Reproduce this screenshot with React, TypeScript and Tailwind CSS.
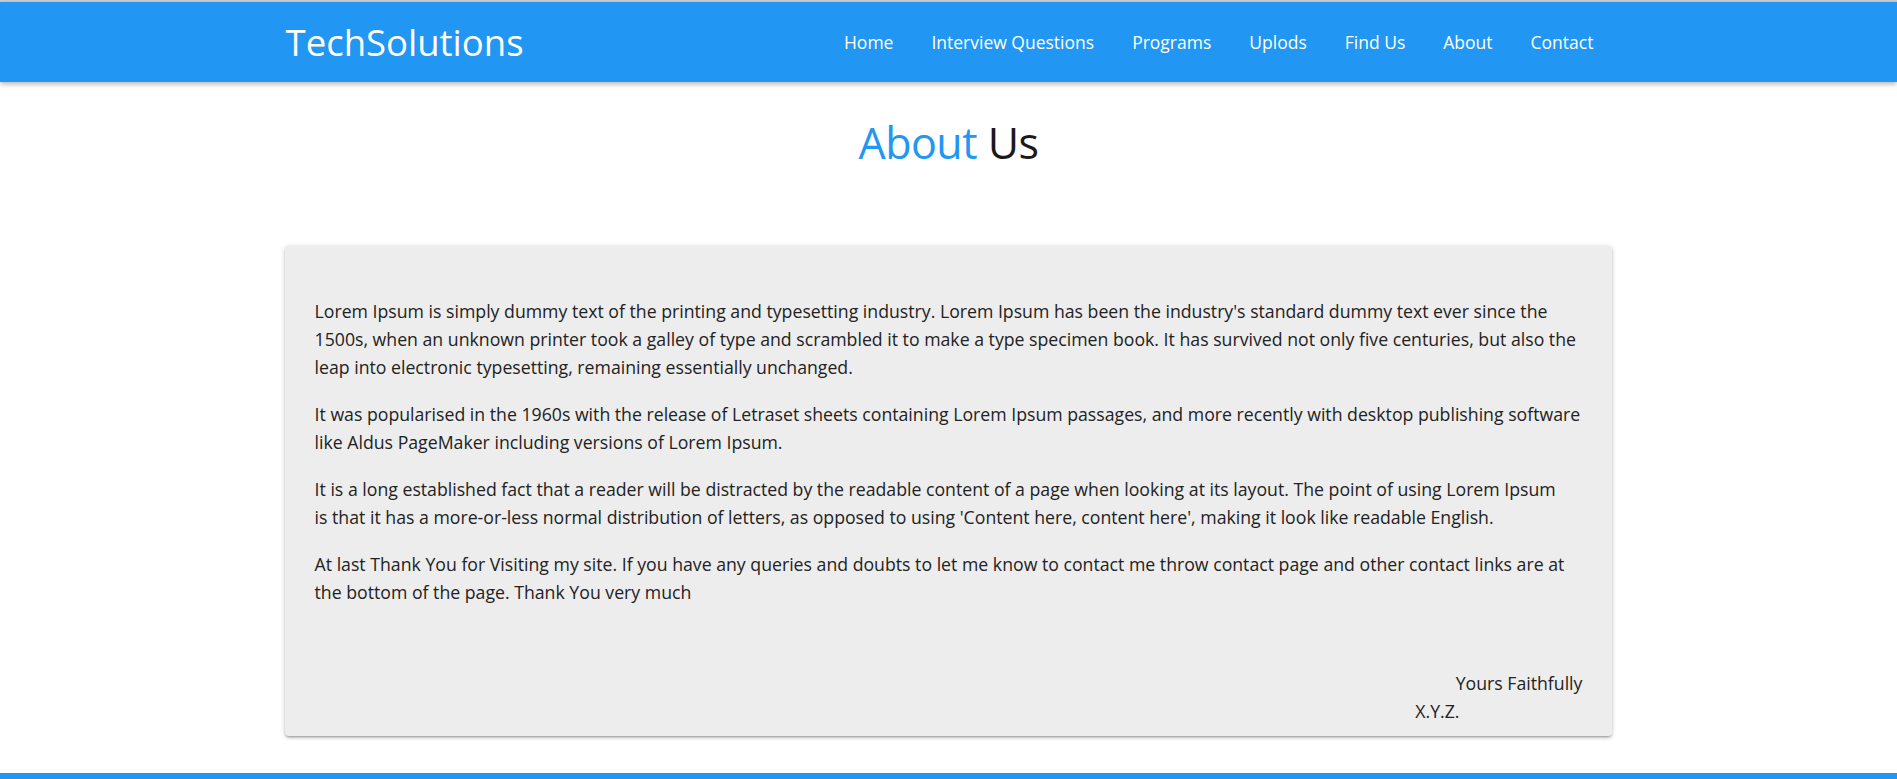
const links = ["Home", "Interview Questions", "Programs", "Uplods", "Find Us", "About", "Contact"];

// lines are broken where the original page broke them
const paragraphs = [
  [
    "Lorem Ipsum is simply dummy text of the printing and typesetting industry. Lorem Ipsum has been the industry's standard dummy text ever since the",
    "1500s, when an unknown printer took a galley of type and scrambled it to make a type specimen book. It has survived not only five centuries, but also the",
    "leap into electronic typesetting, remaining essentially unchanged.",
  ],
  [
    "It was popularised in the 1960s with the release of Letraset sheets containing Lorem Ipsum passages, and more recently with desktop publishing software",
    "like Aldus PageMaker including versions of Lorem Ipsum.",
  ],
  [
    "It is a long established fact that a reader will be distracted by the readable content of a page when looking at its layout. The point of using Lorem Ipsum",
    "is that it has a more-or-less normal distribution of letters, as opposed to using 'Content here, content here', making it look like readable English.",
  ],
  [
    "At last Thank You for Visiting my site. If you have any queries and doubts to let me know to contact me throw contact page and other contact links are at",
    "the bottom of the page. Thank You very much",
  ],
];

export default function App() {
  return (
    <div className="flex min-h-screen flex-col bg-white font-['Open_Sans','Liberation_Sans',sans-serif] text-[#222]">
      <div className="h-[2px] bg-[#cdcdcd]" />
      <header className="bg-[#2196f3] shadow-[0_2px_5px_rgba(0,0,0,0.3)]">
        <nav className="mx-auto flex h-[80px] w-[70%] items-center justify-between">
          <a className="pl-px text-[36.5px] text-white">TechSolutions</a>
          <ul className="flex">
            {links.map((link) => (
              <li key={link}>
                <a className="block px-[19px] text-[17.5px] text-white">{link}</a>
              </li>
            ))}
          </ul>
        </nav>
      </header>

      <main className="flex-1">
        <h1 className="mt-[39px] text-center text-[43px] leading-none tracking-[-0.5px]">
          <span className="text-[#2196f3]">About</span> <span className="text-[#1a1a1a]">Us</span>
        </h1>

        <section className="mx-auto mt-[82px] w-[70%] rounded-sm bg-[#ededed] px-[30px] pt-[32px] pb-[11px] shadow-[0_2px_2px_0_rgba(0,0,0,0.14),0_3px_1px_-2px_rgba(0,0,0,0.12),0_1px_5px_0_rgba(0,0,0,0.2)]">
          {paragraphs.map((lines) => (
            <p key={lines[0]} className="my-[19px] text-[17.7px] leading-[28px]">
              {lines.map((line) => (
                <span key={line} className="block whitespace-nowrap">
                  {line}
                </span>
              ))}
            </p>
          ))}
          <div className="mt-[63px] text-right text-[17.7px] leading-[28px]">
            <p>Yours Faithfully</p>
            <p className="mr-[123px]">X.Y.Z.</p>
          </div>
        </section>
      </main>

      <footer className="mt-[36px] h-[6px] bg-[#2196f3]" />
    </div>
  );
}
